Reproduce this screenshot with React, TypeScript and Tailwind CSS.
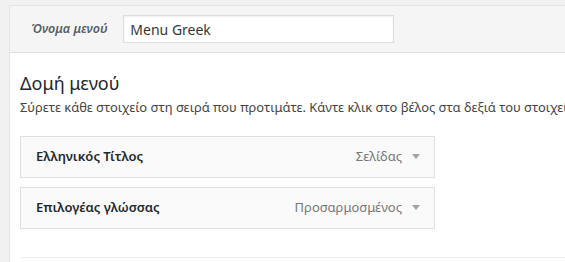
const items = [
  { title: "Ελληνικός Τίτλος", type: "Σελίδας" },
  { title: "Επιλογέας γλώσσας", type: "Προσαρμοσμένος" },
];

const App = () => {
  return (
    <div
      className="h-[262px] w-[565px] overflow-hidden bg-[#f1f1f1] pl-[9px] pt-[5px]"
      style={{ fontFamily: '"Noto Sans", "Open Sans", sans-serif' }}
    >
      <div className="h-[300px] w-[600px] border border-[#e5e5e5] bg-white">
        <div className="flex h-[47px] items-center border-b border-[#dfdfdf] bg-[#f5f5f5] pl-[21px]">
          <label className="text-[12.5px] font-semibold italic text-[#555d66]">
            Όνομα μενού
          </label>
          <div className="ml-[16px] flex h-[28px] w-[271px] items-center border border-[#ddd] bg-white px-[6px] text-[14px] text-[#32373c] shadow-[inset_0_1px_2px_rgba(0,0,0,0.07)]">
            Menu Greek
          </div>
        </div>
        <div className="pl-[10px] pt-[18px]">
          <h3 className="text-[18px] font-normal leading-6 text-[#23282d]">
            Δομή μενού
          </h3>
          <p className="mt-[2px] whitespace-nowrap text-[12.9px] leading-5 text-[#444]">
            Σύρετε κάθε στοιχείο στη σειρά που προτιμάτε. Κάντε κλικ στο βέλος
            στα δεξιά του στοιχείου για να εμφανίσετε επιπλέον επιλογές.
          </p>
          <ul className="mt-[19px] flex flex-col gap-[9px]">
            {items.map((item) => (
              <li
                key={item.title}
                className="flex h-[42px] w-[415px] items-center justify-between border border-[#dfdfdf] bg-[#fafafa] pl-[15px] pr-[14px]"
              >
                <span className="text-[13px] font-semibold text-[#23282d]">
                  {item.title}
                </span>
                <span className="flex items-center gap-[10px] text-[13px] text-[#777]">
                  {item.type}
                  <svg width="8" height="6" viewBox="0 0 8 6">
                    <path d="M0 0 L8 0 L4 5 Z" fill="#a0a5aa" />
                  </svg>
                </span>
              </li>
            ))}
          </ul>
          <div className="mt-[28px] border-t border-[#eee]" />
        </div>
      </div>
    </div>
  );
};

export default App;
